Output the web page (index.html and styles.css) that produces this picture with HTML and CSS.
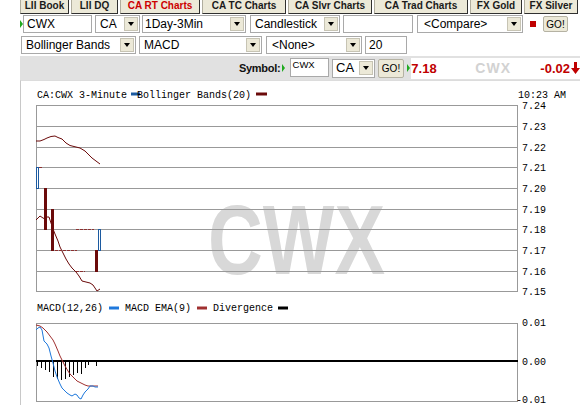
FILE: index.html
```html
<!DOCTYPE html>
<html>
<head>
    <title>CA RT Charts</title>
    <link rel="stylesheet" href="styles.css">
</head>
<body>
    <!-- top tab strip -->
    <div class="tabs">
        <a class="tab t1">LII Book</a>
        <a class="tab t2">LII DQ</a>
        <a class="tab t3 on">CA RT Charts</a>
        <a class="tab t4">CA TC Charts</a>
        <a class="tab t5">CA Slvr Charts</a>
        <a class="tab t6">CA Trad Charts</a>
        <a class="tab t7">FX Gold</a>
        <a class="tab t8">FX Silver</a>
    </div>

    <!-- chart settings -->
    <div class="row">
        <span class="go-arrow"></span>
        <div class="field f-sym">CWX</div>
        <div class="sel s-ca"><span>CA</span><i></i></div>
        <div class="sel s-period"><span>1Day-3Min</span><i></i></div>
        <div class="sel s-type"><span>Candlestick</span><i></i></div>
        <div class="field f-blank"></div>
        <div class="sel s-compare"><span>&lt;Compare&gt;</span><i></i></div>
        <span class="red-dot"></span>
        <button class="go go-top">GO!</button>
    </div>
    <div class="row row3">
        <div class="sel s-study"><span>Bollinger Bands</span><i></i></div>
        <div class="sel s-lower"><span>MACD</span><i></i></div>
        <div class="sel s-none"><span>&lt;None&gt;</span><i></i></div>
        <div class="field f-len">20</div>
    </div>

    <!-- symbol / quote bar -->
    <div class="symbar">
        <span class="sym-label">Symbol:</span>
        <span class="go-arrow"></span>
        <div class="field f-small">CWX</div>
        <div class="sel s-ca2"><span>CA</span><i></i></div>
        <button class="go go-sym">GO!</button>
        <span class="go-arrow ga2"></span>
        <div class="quote">
            <span class="last">7.18</span>
            <span class="qsym">CWX</span>
            <span class="chg">-0.02</span>
            <svg class="down" width="9" height="12" viewBox="0 0 9 12"><path d="M3 0h3v6h3l-4.5 6L0 6h3z" fill="#c00000"/></svg>
        </div>
    </div>

    <!-- chart -->
    <div class="chart">
        <svg width="559" height="325" viewBox="21 80 559 325" class="plot">
            <text x="208" y="273" class="wm" textLength="177" lengthAdjust="spacingAndGlyphs">CWX</text>

            <text x="37" y="97" class="lbl">CA:CWX 3-Minute</text>
            <line x1="131" y1="93" x2="140" y2="93" stroke="#1c5aa0" stroke-width="3"/>
            <text x="137" y="97" class="lbl">Bollinger Bands(20)</text>
            <line x1="256" y1="93" x2="267" y2="93" stroke="#6b0a0a" stroke-width="3"/>
            <text x="518" y="97" class="lbl">10:23 AM</text>

            <g stroke="#999" stroke-width="1">
                <line x1="36" y1="104.5" x2="518" y2="104.5"/>
                <line x1="36" y1="125.5" x2="518" y2="125.5"/>
                <line x1="36" y1="146.5" x2="518" y2="146.5"/>
                <line x1="36" y1="166.5" x2="518" y2="166.5"/>
                <line x1="36" y1="187.5" x2="518" y2="187.5"/>
                <line x1="36" y1="208.5" x2="518" y2="208.5"/>
                <line x1="36" y1="228.5" x2="518" y2="228.5"/>
                <line x1="36" y1="249.5" x2="518" y2="249.5"/>
                <line x1="36" y1="270.5" x2="518" y2="270.5"/>
                <line x1="36" y1="290.5" x2="518" y2="290.5"/>
                <line x1="36.5" y1="104" x2="36.5" y2="291"/>
                <line x1="517.5" y1="104" x2="517.5" y2="291"/>
            </g>
            <g class="lbl">
                <text x="522" y="108">7.24</text>
                <text x="522" y="129">7.23</text>
                <text x="522" y="150">7.22</text>
                <text x="522" y="170">7.21</text>
                <text x="522" y="191">7.20</text>
                <text x="522" y="212">7.19</text>
                <text x="522" y="232">7.18</text>
                <text x="522" y="253">7.17</text>
                <text x="522" y="274">7.16</text>
                <text x="522" y="294">7.15</text>
            </g>

            <!-- bollinger bands -->
            <polyline fill="none" stroke="#6b0a0a" stroke-width="1" points="36,140 40,140 44,138.5 47,137 51,135.5 55,135 58,136.5 62,138 66,142 70,144.5 74,145.5 80,147 85,150 88,153 92,157 96,160 100,163"/>
            <polyline fill="none" stroke="#6b0a0a" stroke-width="1" points="36,219 40,215 43,217 45,218 47,216 49,216 51,222 53,228 55,233 58,240 60,246 63,252 66,258 69,263 72,267 76,271 79,275 82,280 86,281 90,282 93,284 95,287 97,290 100,288"/>

            <!-- candles -->
            <g fill="#6b0a0a">
                <rect x="44" y="187" width="3" height="42"/>
                <rect x="51" y="208" width="3" height="42"/>
                <rect x="95" y="249" width="3" height="22"/>
            </g>
            <g stroke="#8b3030" stroke-width="1" stroke-dasharray="3,1">
                <line x1="39" y1="166.5" x2="43" y2="166.5"/>
                <line x1="55" y1="249.5" x2="77" y2="249.5"/>
                <line x1="76" y1="228.5" x2="94" y2="228.5"/>
                <line x1="76" y1="270.5" x2="85" y2="270.5"/>
            </g>
            <rect x="36.5" y="166.5" width="2" height="21" fill="#fff" stroke="#1c5aa0"/>
            <rect x="98.5" y="228.5" width="2" height="21" fill="#fff" stroke="#1c5aa0"/>

            <!-- macd panel -->
            <text x="37" y="310" class="lbl">MACD(12,26)</text>
            <line x1="109" y1="307" x2="119" y2="307" stroke="#1e78dc" stroke-width="3"/>
            <text x="125" y="310" class="lbl">MACD EMA(9)</text>
            <line x1="197" y1="307" x2="207" y2="307" stroke="#a03030" stroke-width="3"/>
            <text x="213" y="310" class="lbl">Divergence</text>
            <line x1="278" y1="307" x2="288" y2="307" stroke="#000" stroke-width="3"/>

            <rect x="36.5" y="322.5" width="481" height="78" fill="none" stroke="#999"/>
            <g class="lbl">
                <text x="522" y="325">0.01</text>
                <text x="522" y="364">0.00</text>
                <text x="516" y="402">-0.01</text>
            </g>
            <g stroke="#000" stroke-width="1">
                <line x1="37.5" y1="360" x2="37.5" y2="365"/>
                <line x1="41.5" y1="360" x2="41.5" y2="367"/>
                <line x1="45.5" y1="360" x2="45.5" y2="369"/>
                <line x1="49.5" y1="360" x2="49.5" y2="371"/>
                <line x1="53.5" y1="360" x2="53.5" y2="376"/>
                <line x1="57.5" y1="360" x2="57.5" y2="378"/>
                <line x1="61.5" y1="360" x2="61.5" y2="379"/>
                <line x1="65.5" y1="360" x2="65.5" y2="378"/>
                <line x1="69.5" y1="360" x2="69.5" y2="376"/>
                <line x1="73.5" y1="360" x2="73.5" y2="374"/>
                <line x1="77.5" y1="360" x2="77.5" y2="372"/>
                <line x1="81.5" y1="360" x2="81.5" y2="373"/>
                <line x1="85.5" y1="360" x2="85.5" y2="367"/>
                <line x1="88.5" y1="360" x2="88.5" y2="364"/>
                <line x1="96.5" y1="360" x2="96.5" y2="365"/>
            </g>
            <line x1="36" y1="360" x2="518" y2="360" stroke="#000" stroke-width="2"/>
            <polyline fill="none" stroke="#a03030" stroke-width="1" points="36,324 40,325 43,327 47,331 50,335 53,339 55,343 58,350 60,355 63,361 65,365 68,370 70,373 74,377 77,380 81,382 85,384 88,385 92,385 95,385 98,385"/>
            <polyline fill="none" stroke="#1e78dc" stroke-width="1" points="36,329 38,327 40,326 42,329 44,340 47,343 49,347 51,355 53,362 55,370 57,376 60,383 62,387 65,390 67,392 70,394 72,395 75,393 77,394 79,397 81,398 83,394 85,391 88,388 90,385 93,385 95,386 98,386"/>
        </svg>
    </div>
</body>
</html>
```

FILE: styles.css
```css
body {
    margin: 0;
    width: 580px;
    height: 405px;
    overflow: hidden;
    background: #fff;
    color: #000;
    font-family: "Liberation Sans", Arial, sans-serif;
    font-size: 12px;
}

/* tab strip */
.tabs {
    display: flex;
    gap: 2px;
    padding-left: 20px;
    height: 14px;
}
.tab {
    box-sizing: border-box;
    height: 14px;
    background: #ece9d8;
    border: 1px solid #b0ad9e;
    border-top: none;
    border-right-color: #303030;
    border-bottom-color: #303030;
    font-size: 10px;
    font-weight: bold;
    line-height: 12px;
    text-align: center;
    color: #1a1a1a;
    white-space: nowrap;
}
.tab.on { color: #cc0000; }
.t1 { width: 49px; }
.t2 { width: 47px; }
.t3 { width: 80px; }
.t4 { width: 84px; }
.t5 { width: 84px; }
.t6 { width: 94px; }
.t7 { width: 52px; }
.t8 { width: 54px; }

/* form rows */
.row {
    display: flex;
    align-items: center;
    height: 18px;
    margin-top: 1px;
    padding-left: 20px;
}
.row3 {
    margin-top: 3px;
    padding-left: 21px;
}

.go-arrow {
    width: 0;
    height: 0;
    border-left: 3px solid #1faa1f;
    border-top: 4px solid transparent;
    border-bottom: 4px solid transparent;
}

.field, .sel {
    box-sizing: border-box;
    height: 18px;
    border: 1px solid #a9a9a9;
    background: #fff;
    font-size: 12px;
    line-height: 16px;
    white-space: nowrap;
    overflow: hidden;
}
.field { padding-left: 3px; }
.sel {
    display: flex;
    align-items: center;
    justify-content: space-between;
}
.sel span { padding-left: 4px; }
.sel i {
    box-sizing: border-box;
    display: flex;
    align-items: center;
    justify-content: center;
    width: 14px;
    height: 14px;
    margin-right: 1px;
    background: #ece9d8;
    border: 1px solid #c7c4b4;
}
.sel i::after {
    content: "";
    border-top: 4px solid #000;
    border-left: 3.5px solid transparent;
    border-right: 3.5px solid transparent;
}

.f-sym { width: 69px; }
.s-ca { width: 45px; margin-left: 3px; }
.s-period { width: 104px; margin-left: 2px; }
.s-period span { padding-left: 2px; }
.s-type { width: 90px; margin-left: 4px; }
.f-blank { width: 70px; margin-left: 3px; }
.s-compare { width: 106px; margin-left: 4px; }
.s-compare span { padding-left: 6px; }

.red-dot {
    width: 6px;
    height: 6px;
    margin-left: 7px;
    background: #c00000;
}

.go {
    box-sizing: border-box;
    padding: 0;
    background: #ece9d8;
    border: 1px solid #b5b2a3;
    border-radius: 2px;
    font-family: "Liberation Sans", Arial, sans-serif;
    font-size: 10px;
    color: #000;
}
.go-top { width: 25px; height: 16px; margin-left: 7px; }

.s-study { width: 115px; }
.s-lower { width: 123px; margin-left: 3px; }
.s-none { width: 96px; margin-left: 4px; }
.s-none span { padding-left: 5px; }
.f-len { width: 42px; margin-left: 3px; }

/* symbol / quote bar */
.symbar {
    display: flex;
    align-items: center;
    height: 24px;
    margin-top: 2px;
    margin-left: 20px;
    background: #e1e1e1;
}
.sym-label {
    width: 43px;
    margin-left: 219px;
    font-size: 11px;
    font-weight: bold;
    letter-spacing: -0.3px;
    color: #111;
}
.f-small {
    width: 40px;
    height: 19px;
    margin-left: 5px;
    align-self: flex-start;
    margin-top: 2px;
    padding-left: 2px;
    font-size: 9.5px;
    line-height: 11px;
}
.s-ca2 { width: 43px; height: 19px; margin-left: 3px; }
.s-ca2 span { padding-left: 3px; font-size: 13px; }
.go-sym { width: 27px; height: 19px; margin-left: 3px; }
.ga2 { margin-left: 3px; }

.quote {
    display: flex;
    align-items: center;
    flex: 1;
    height: 21px;
    margin-left: 1px;
    background: #fff;
    font-size: 13px;
    font-weight: bold;
}
.last { width: 64px; color: #c00000; }
.qsym { width: 65px; color: #d2d2d2; font-size: 14px; letter-spacing: 1px; }
.chg { color: #c00000; }
.down { margin-left: 1px; }

/* chart */
.chart {
    margin-left: 20px;
    border-left: 1px solid #c8c8c8;
    border-top: 1px solid #dcdcdc;
    height: 325px;
}
.plot { display: block; }
.lbl {
    font-family: "Liberation Mono", "DejaVu Sans Mono", monospace;
    font-size: 10px;
    fill: #000;
}
.wm {
    font-family: "Liberation Sans", Arial, sans-serif;
    font-weight: bold;
    font-size: 99px;
    fill: #d8d8d8;
}
```
